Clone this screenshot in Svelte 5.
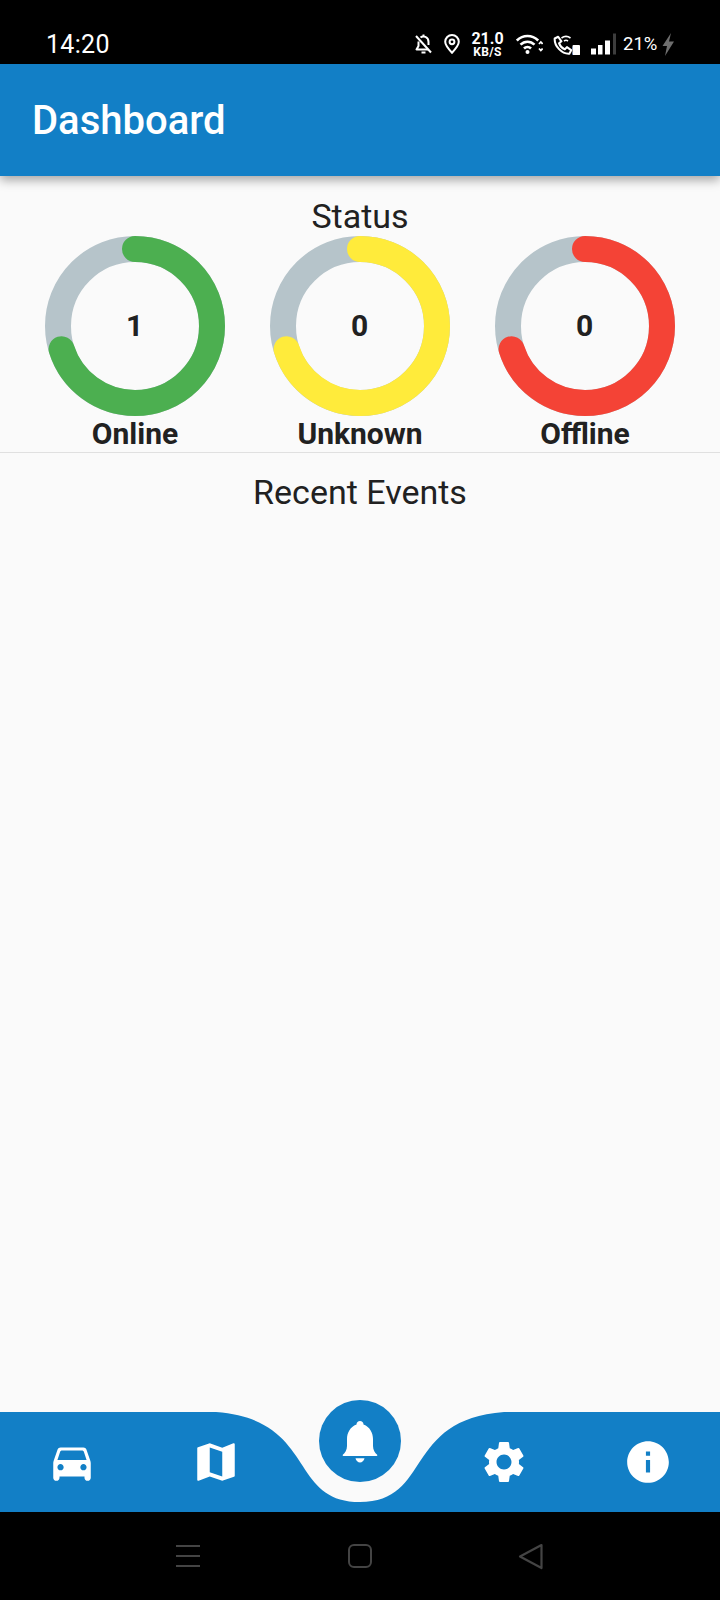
<script>
  const rings = [
    { label: 'Online', value: 1, color: '#4caf50' },
    { label: 'Unknown', value: 0, color: '#ffeb3b' },
    { label: 'Offline', value: 0, color: '#f44336' },
  ]
  const circumference = 2 * Math.PI * 77
  const progress = 0.7

  const navIcons = {
    car: 'M18.92 6.01C18.72 5.42 18.16 5 17.5 5h-11c-.66 0-1.21.42-1.42 1.01L3.21 11.34c-.14.42-.21.86-.21 1.3v6.86c0 .83.67 1.5 1.5 1.5S6 20.33 6 19.5V19h12v.5c0 .83.67 1.5 1.5 1.5s1.5-.67 1.5-1.5v-6.86c0-.44-.07-.88-.21-1.3l-1.87-5.33zM6.5 16c-.83 0-1.5-.67-1.5-1.5S5.67 13 6.5 13s1.5.67 1.5 1.5S7.33 16 6.5 16zm11 0c-.83 0-1.5-.67-1.5-1.5s.67-1.5 1.5-1.5 1.5.67 1.5 1.5-.67 1.5-1.5 1.5zM5 11l1.27-3.82c.14-.4.52-.68.95-.68h9.56c.43 0 .81.28.95.68L19 11H5z',
    map: 'M20.5 3l-.16.03L15 5.1 9 3 3.36 4.9c-.21.07-.36.25-.36.48V20.5c0 .28.22.5.5.5l.16-.03L9 18.9l6 2.1 5.64-1.9c.21-.07.36-.25.36-.48V3.5c0-.28-.22-.5-.5-.5zM15 19l-6-2.11V5l6 2.11V19z',
    gear: 'M19.14 12.94c.04-.3.06-.61.06-.94 0-.32-.02-.64-.07-.94l2.03-1.58c.18-.14.23-.41.12-.61l-1.92-3.32c-.12-.22-.37-.29-.59-.22l-2.39.96c-.5-.38-1.03-.7-1.62-.94l-.36-2.54c-.04-.24-.24-.41-.48-.41h-3.84c-.24 0-.43.17-.47.41l-.36 2.54c-.59.24-1.13.57-1.62.94l-2.39-.96c-.22-.08-.47 0-.59.22L2.74 8.87c-.12.21-.08.47.12.61l2.03 1.58c-.05.3-.09.63-.09.94s.02.64.07.94l-2.03 1.58c-.18.14-.23.41-.12.61l1.92 3.32c.12.22.37.29.59.22l2.39-.96c.5.38 1.03.7 1.62.94l.36 2.54c.05.24.24.41.48.41h3.84c.24 0 .44-.17.47-.41l.36-2.54c.59-.24 1.13-.56 1.62-.94l2.39.96c.22.08.47 0 .59-.22l1.92-3.32c.12-.22.07-.47-.12-.61l-2.01-1.58zM12 15.6c-1.98 0-3.6-1.62-3.6-3.6s1.62-3.6 3.6-3.6 3.6 1.62 3.6 3.6-1.62 3.6-3.6 3.6z',
    info: 'M12 2C6.48 2 2 6.48 2 12s4.48 10 10 10 10-4.48 10-10S17.52 2 12 2zm1 15h-2v-6h2v6zm0-8h-2V7h2v2z',
  }
  const navItems = ['car', 'map', null, 'gear', 'info']
</script>

<div class="screen">
  <div class="status-bar">
    <span class="time">14:20</span>
    <div class="status-icons">
      <svg class="s-bell" width="17" height="20" viewBox="0 0 17 20" fill="none" stroke="#fff" stroke-width="2" stroke-linejoin="round">
        <path d="M3.500 7.500V12L1.500 15.500H13.500" />
        <path d="M5.500 3.500C8 1.500 13.500 2.500 13.500 8V11" />
        <path d="M1 2L16 18.500" />
        <path d="M6.500 18.500H10.500" />
        <path d="M8.500 0.500V3" />
      </svg>
      <svg class="s-pin" width="16" height="20" viewBox="0 0 16 20" fill="none" stroke="#fff" stroke-width="2">
        <path d="M8 18.700C4 14.500 1.200 11.200 1.200 7.800a6.800 6.800 0 0 1 13.600 0c0 3.400-2.800 6.700-6.800 10.900z" />
        <circle cx="8" cy="7.800" r="2.400" />
      </svg>
      <div class="speed">
        <span class="speed-value">21.0</span>
        <span class="speed-unit">KB/S</span>
      </div>
      <svg class="s-wifi" width="27" height="20" viewBox="0 0 27 20" fill="none" stroke="#fff" stroke-width="2.600">
        <path d="M0.800 6.500c6.200-6 15.200-6 21.400 0" />
        <path d="M4.500 10.700c4-4 10-4 14 0" />
        <path d="M8 14.500c2-2 5-2 7 0" />
        <circle cx="11.500" cy="18" r="2" fill="#fff" stroke="none" />
        <path d="M23 10l1.800-2 1.800 2M23 14.500l1.800 2 1.800-2" stroke-width="1.800" />
      </svg>
      <svg class="s-call" width="27" height="20" viewBox="0 0 27 20" fill="none" stroke="#fff" stroke-width="2">
        <path transform="scale(1.150)" d="M1.500 3l3-1.500 2.800 4-2 1.700c.8 2.200 2.700 4.200 5 5.300l1.800-2 3.700 2.700-1.500 3c-6.500.5-13.300-6.500-12.800-13.200z" stroke-width="1.800" stroke-linejoin="round" />
        <path d="M8.500 3c3-2.200 6-2.200 9 0M11 6c1.400-1 2.600-1 4 0" stroke-width="1.600" />
        <rect x="19.500" y="10" width="7.500" height="10" rx="1" fill="#fff" stroke="none" />
        <text class="sim" x="23.250" y="18.600" text-anchor="middle">2</text>
      </svg>
      <svg class="s-signal" width="25" height="23" viewBox="0 0 25 23">
        <rect x="0" y="15.500" width="5" height="6" fill="#fff" />
        <rect x="7" y="12" width="4.500" height="9.500" fill="#fff" />
        <rect x="14" y="7.500" width="5" height="14" fill="#fff" />
        <rect x="22" y="0.500" width="3" height="21" fill="#3d3d3d" />
      </svg>
      <span class="battery">21%</span>
      <svg class="s-bolt" width="12" height="23" viewBox="0 0 12 23">
        <path d="M9 0L0.500 13h4.500L3 23 12 8.500H7z" fill="#6e6e6e" />
      </svg>
    </div>
  </div>

  <header class="app-bar">
    <h1>Dashboard</h1>
  </header>

  <main class="content">
    <h2 class="status-title">Status</h2>
    <div class="rings">
      {#each rings as ring}
        <div class="ring">
          <div class="ring-chart">
            <svg width="180" height="180" viewBox="0 0 180 180" fill="none">
              <circle cx="90" cy="90" r="77" stroke="#b6c4ca" stroke-width="26" />
              <circle
                cx="90"
                cy="90"
                r="77"
                stroke={ring.color}
                stroke-width="26"
                stroke-linecap="round"
                stroke-dasharray="{progress * circumference} {circumference}"
                transform="rotate(-90 90 90)"
              />
            </svg>
            <span class="ring-value">{ring.value}</span>
          </div>
          <span class="ring-label">{ring.label}</span>
        </div>
      {/each}
    </div>
    <hr class="divider" />
    <h2 class="events-title">Recent Events</h2>
  </main>

  <nav class="bottom-nav">
    <svg class="nav-bg" width="720" height="100" viewBox="0 0 720 100">
      <path d="M0 0H216C316.800 7.500 288 90 360 90C432 90 403.200 7.500 504 0H720V100H0Z" fill="#127fc6" />
    </svg>
    {#each navItems as item}
      <div class="nav-item">
        {#if item}
          <svg width="50" height="50" viewBox="0 0 24 24"><path d={navIcons[item]} fill="#fff" /></svg>
        {/if}
      </div>
    {/each}
    <div class="nav-fab">
      <svg width="50" height="50" viewBox="0 0 50 50" fill="#fff">
        <path d="M25 5C23 5 21.500 6.500 21.500 8.500C15 11 12 17 12 23V30C12 34 10 37 7.800 38.800Q7.200 40 8.500 40H41.500Q42.800 40 42.200 38.800C40 37 38 34 38 30V23C38 17 35 11 28.500 8.500C28.500 6.500 27 5 25 5Z" />
        <path d="M20.500 42.300H29.500C29 45 27 46.500 25 46.500C23 46.500 21 45 20.500 42.300Z" />
      </svg>
    </div>
  </nav>

  <div class="system-nav">
    <svg class="sys-menu" width="24" height="22" viewBox="0 0 24 22" fill="none" stroke="#444" stroke-width="2">
      <path d="M0 1h24M0 11h24M0 21h24" />
    </svg>
    <svg class="sys-home" width="24" height="24" viewBox="0 0 24 24" fill="none" stroke="#444" stroke-width="2">
      <rect x="1" y="1" width="22" height="22" rx="5" />
    </svg>
    <svg class="sys-back" width="25" height="27" viewBox="0 0 25 27" fill="none" stroke="#444" stroke-width="2.200" stroke-linejoin="round">
      <path d="M23.500 2L2 13.500 23.500 25z" />
    </svg>
  </div>
</div>

<style>
  :global(body) {
    margin: 0;
    background: #fafafa;
  }

  .screen {
    display: flex;
    flex-direction: column;
    width: 720px;
    height: 1600px;
    overflow: hidden;
    font-family: Roboto, "Liberation Sans", sans-serif;
    color: #212121;
    background: #fafafa;
  }

  .status-bar {
    display: flex;
    align-items: center;
    justify-content: space-between;
    flex: none;
    height: 64px;
    padding: 24px 46px 0 46px;
    box-sizing: border-box;
    background: #000;
    color: #fff;
  }

  .time {
    font-size: 25px;
    letter-spacing: 0.3px;
  }

  .status-icons {
    display: flex;
    align-items: center;
  }

  .s-pin { margin-left: 12px; }
  .s-wifi { margin-left: 13px; }
  .s-call { margin-left: 10px; margin-top: 2px; }
  .s-signal { margin-left: 11px; }
  .s-bolt { margin-left: 5px; }

  .speed {
    display: flex;
    flex-direction: column;
    align-items: center;
    width: 31px;
    margin-left: 12px;
    font-weight: 700;
    line-height: 1;
  }

  .speed-value { font-size: 16px; }
  .speed-unit { font-size: 12px; letter-spacing: 0.4px; margin-top: -1px; }

  .sim {
    font-family: Roboto, sans-serif;
    font-size: 10px;
    font-weight: 700;
    fill: #000;
  }

  .battery {
    width: 34px;
    margin-left: 7px;
    font-size: 18.5px;
    white-space: nowrap;
  }

  .app-bar {
    position: relative;
    display: flex;
    align-items: center;
    flex: none;
    height: 112px;
    padding: 0 32px;
    box-sizing: border-box;
    background: #127fc6;
    box-shadow: 0 4px 10px rgba(0, 0, 0, 0.35);
  }

  .app-bar h1 {
    margin: 0;
    font-size: 40px;
    font-weight: 500;
    color: #fff;
  }

  .content {
    flex: 1;
    min-height: 0;
    padding-top: 21px;
  }

  .status-title,
  .events-title {
    margin: 0;
    font-size: 34px;
    font-weight: 400;
    line-height: 39px;
    text-align: center;
  }

  .rings {
    display: flex;
    justify-content: space-evenly;
  }

  .ring {
    display: flex;
    flex-direction: column;
    align-items: center;
  }

  .ring-chart {
    position: relative;
    width: 180px;
    height: 180px;
  }

  .ring-chart svg {
    display: block;
  }

  .ring-value {
    position: absolute;
    inset: 0 1px 2px 0;
    display: flex;
    align-items: center;
    justify-content: center;
    font-size: 30px;
    font-weight: 700;
  }

  .ring-label {
    font-size: 30px;
    font-weight: 700;
    line-height: 36px;
  }

  .divider {
    height: 1px;
    margin: 0;
    border: 0;
    background: #e0e0e0;
  }

  .events-title {
    margin-top: 20px;
  }

  .bottom-nav {
    position: relative;
    display: flex;
    flex: none;
    height: 100px;
  }

  .nav-bg {
    position: absolute;
    inset: 0;
    display: block;
  }

  .nav-item {
    position: relative;
    display: flex;
    align-items: center;
    justify-content: center;
    flex: 1;
  }

  .nav-fab {
    position: absolute;
    top: -12px;
    left: 319px;
    display: flex;
    align-items: center;
    justify-content: center;
    width: 82px;
    height: 82px;
    border-radius: 50%;
    background: #127fc6;
  }

  .system-nav {
    display: flex;
    align-items: center;
    flex: none;
    height: 88px;
    padding-left: 176px;
    box-sizing: border-box;
    background: #000;
  }

  .sys-home { margin-left: 148px; }
  .sys-back { margin-left: 146px; }
</style>
